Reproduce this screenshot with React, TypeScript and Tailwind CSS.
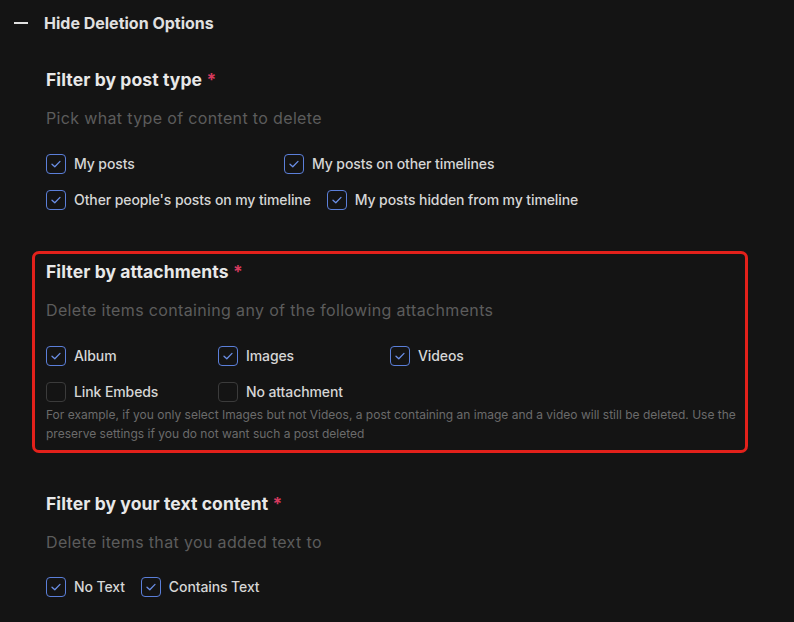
import { ReactNode } from 'react'

function Check({ checked, label }: { checked: boolean; label: string }) {
  return (
    <label className="flex h-5 items-center gap-2 whitespace-nowrap">
      <span
        className={
          'flex h-5 w-5 shrink-0 items-center justify-center rounded-[4px] border-[1.5px] ' +
          (checked ? 'border-[#5b7fd9]' : 'border-[#3b3b3b]')
        }
      >
        {checked && (
          <svg width="12" height="12" viewBox="0 0 12 12" fill="none">
            <path d="M2 6.2 L4.8 8.8 L10 3.4" stroke="#6b8fe6" strokeWidth="1.3" strokeLinecap="round" strokeLinejoin="round" />
          </svg>
        )}
      </span>
      <span className="text-[14px] font-medium leading-5 tracking-[-0.1px] text-[#d6d6d6]">{label}</span>
    </label>
  )
}

function Section({ title, hint, children }: { title: string; hint: string; children: ReactNode }) {
  return (
    <>
      <h3 className="text-[17.5px] font-bold leading-6 tracking-[0.1px] text-[#e8e8e8]">
        {title} <span className="text-[#d63a5e]">*</span>
      </h3>
      <p className="mt-[14px] text-[16px] leading-6 tracking-[0.35px] text-[#5c5c5c]">{hint}</p>
      {children}
    </>
  )
}

export default function App() {
  return (
    <div className="h-[622px] w-[794px] overflow-hidden bg-[#141414] font-['Inter',sans-serif]">
      <div className="flex h-[45px] items-center gap-4 pl-[14px]">
        <span className="h-[2px] w-[14px] bg-[#e0e0e0]" />
        <span className="text-[16px] font-bold text-[#e0e0e0]">Hide Deletion Options</span>
      </div>

      <div className="ml-[32px] flex w-[716px] flex-col">
        <section className="px-[14px] pt-[23px]">
          <Section title="Filter by post type" hint="Pick what type of content to delete">
            <div className="mt-6 flex flex-wrap gap-4">
              <div className="min-w-[222px]"><Check checked label="My posts" /></div>
              <div className="min-w-[222px]"><Check checked label="My posts on other timelines" /></div>
              <div><Check checked label="Other people's posts on my timeline" /></div>
              <div><Check checked label="My posts hidden from my timeline" /></div>
            </div>
          </Section>
        </section>

        <section className="mt-[41px] rounded-[7px] border-[3px] border-[#e3211b] pb-[7px] pl-[11px] pr-[6px] pt-[6px]">
          <Section title="Filter by attachments" hint="Delete items containing any of the following attachments">
            <div className="mt-6 grid grid-cols-[172px_172px_172px] gap-y-4">
              <Check checked label="Album" />
              <Check checked label="Images" />
              <Check checked label="Videos" />
              <Check checked={false} label="Link Embeds" />
              <Check checked={false} label="No attachment" />
            </div>
            <p className="mt-[3px] text-[12px] leading-[19px] text-[#6b6b6b]">
              For example, if you only select Images but not Videos, a post containing an image and a video will still be deleted. Use the preserve settings if you do not want such a post deleted
            </p>
          </Section>
        </section>

        <section className="mt-[39px] px-[14px]">
          <Section title="Filter by your text content" hint="Delete items that you added text to">
            <div className="mt-[23px] flex gap-4">
              <Check checked label="No Text" />
              <Check checked label="Contains Text" />
            </div>
          </Section>
        </section>
      </div>
    </div>
  )
}
